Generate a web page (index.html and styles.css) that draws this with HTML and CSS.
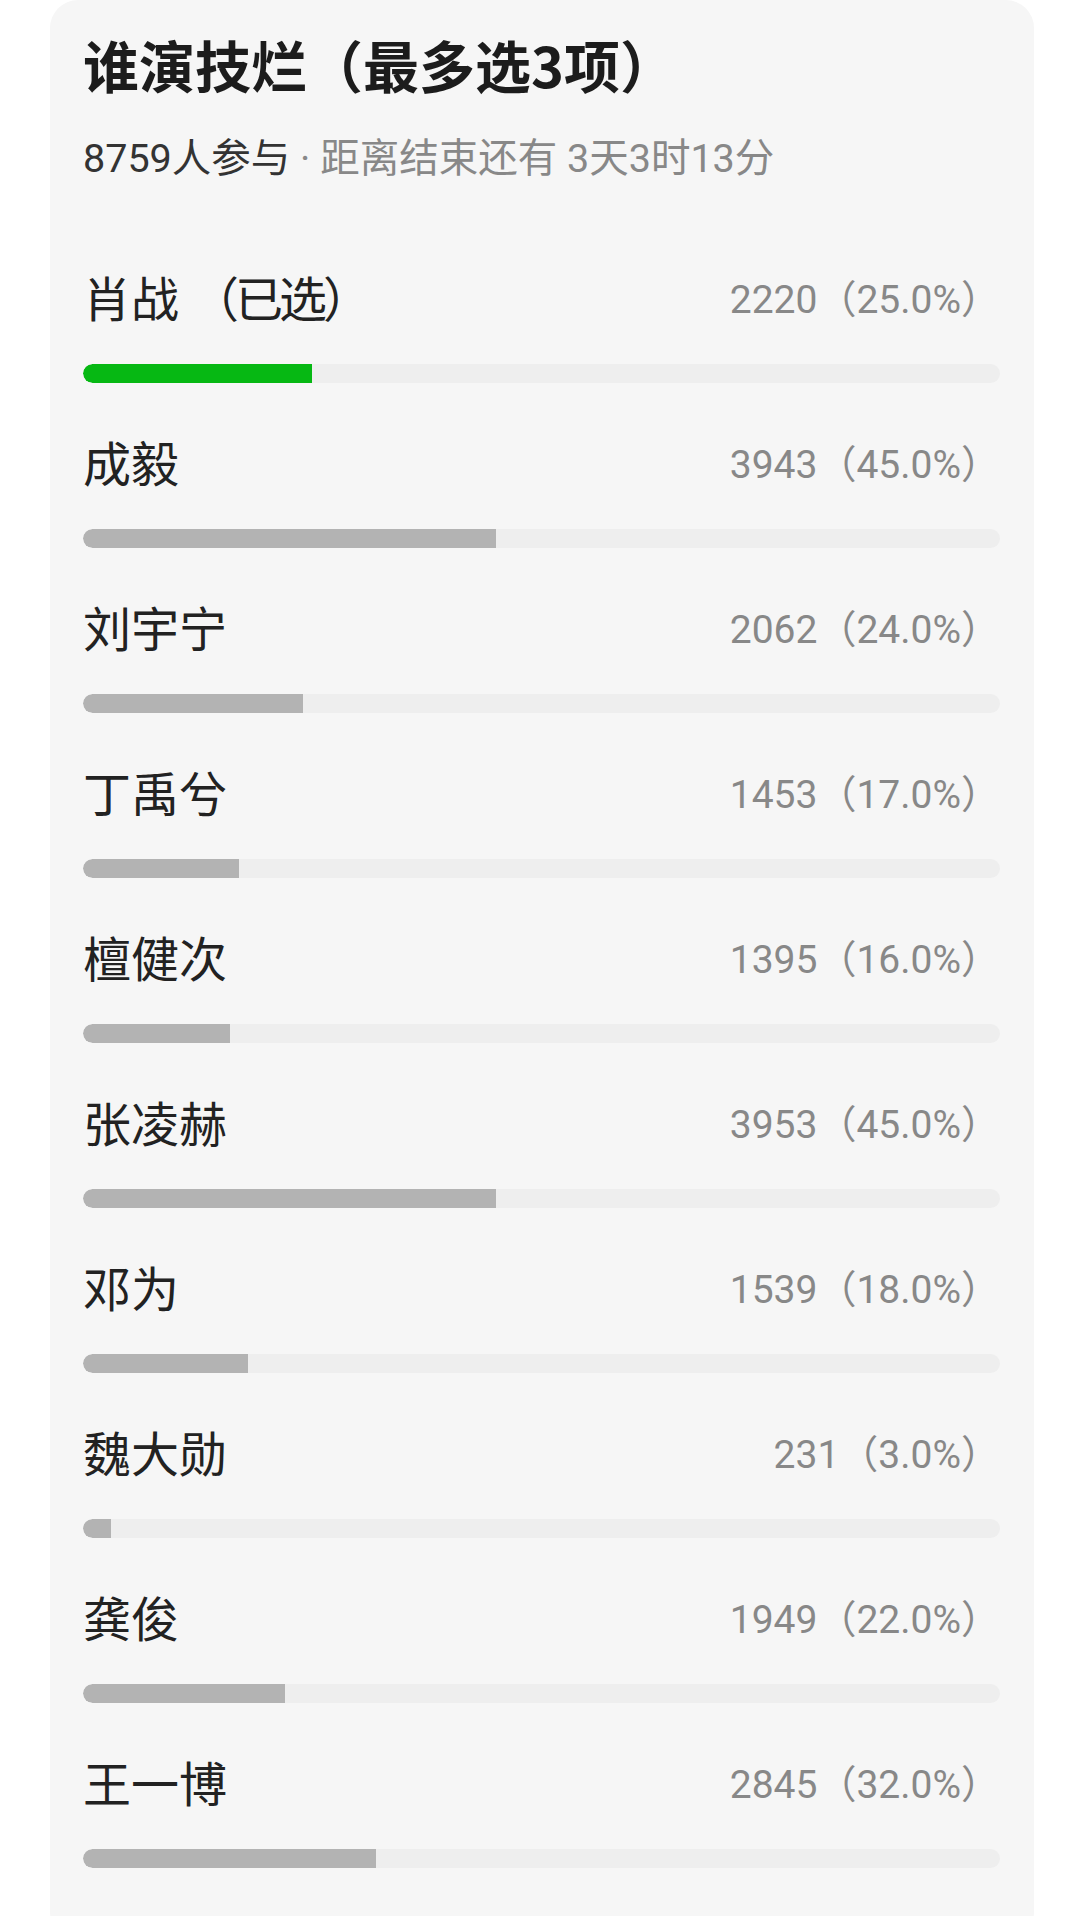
FILE: index.html
```html
<!DOCTYPE html>
<html lang="zh-CN">
<head>
<meta charset="UTF-8">
<meta name="viewport" content="width=device-width, initial-scale=1.0">
<title>谁演技烂</title>
<link rel="stylesheet" href="styles.css">
</head>
<body>

<div class="vote-card">
  <h1 class="vote-title">谁演技烂（最多选3项）</h1>
  <p class="vote-meta"><span class="count-people">8759人参与</span> · 距离结束还有 3天3时13分</p>

  <div class="options">
    <div class="option">
      <div class="option-head">
        <span class="option-name">肖战 <span class="picked">（已选）</span></span>
        <span class="option-count">2220（25.0%）</span>
      </div>
      <div class="bar"><div class="bar-fill chosen" style="width: 25%"></div></div>
    </div>

    <div class="option">
      <div class="option-head">
        <span class="option-name">成毅</span>
        <span class="option-count">3943（45.0%）</span>
      </div>
      <div class="bar"><div class="bar-fill" style="width: 45%"></div></div>
    </div>

    <div class="option">
      <div class="option-head">
        <span class="option-name">刘宇宁</span>
        <span class="option-count">2062（24.0%）</span>
      </div>
      <div class="bar"><div class="bar-fill" style="width: 24%"></div></div>
    </div>

    <div class="option">
      <div class="option-head">
        <span class="option-name">丁禹兮</span>
        <span class="option-count">1453（17.0%）</span>
      </div>
      <div class="bar"><div class="bar-fill" style="width: 17%"></div></div>
    </div>

    <div class="option">
      <div class="option-head">
        <span class="option-name">檀健次</span>
        <span class="option-count">1395（16.0%）</span>
      </div>
      <div class="bar"><div class="bar-fill" style="width: 16%"></div></div>
    </div>

    <div class="option">
      <div class="option-head">
        <span class="option-name">张凌赫</span>
        <span class="option-count">3953（45.0%）</span>
      </div>
      <div class="bar"><div class="bar-fill" style="width: 45%"></div></div>
    </div>

    <div class="option">
      <div class="option-head">
        <span class="option-name">邓为</span>
        <span class="option-count">1539（18.0%）</span>
      </div>
      <div class="bar"><div class="bar-fill" style="width: 18%"></div></div>
    </div>

    <div class="option">
      <div class="option-head">
        <span class="option-name">魏大勋</span>
        <span class="option-count">231（3.0%）</span>
      </div>
      <div class="bar"><div class="bar-fill" style="width: 3%"></div></div>
    </div>

    <div class="option">
      <div class="option-head">
        <span class="option-name">龚俊</span>
        <span class="option-count">1949（22.0%）</span>
      </div>
      <div class="bar"><div class="bar-fill" style="width: 22%"></div></div>
    </div>

    <div class="option">
      <div class="option-head">
        <span class="option-name">王一博</span>
        <span class="option-count">2845（32.0%）</span>
      </div>
      <div class="bar"><div class="bar-fill" style="width: 32%"></div></div>
    </div>
  </div>
</div>

</body>
</html>
```

FILE: styles.css
```css
/* Reset */
* {
  box-sizing: border-box;
  margin: 0;
  padding: 0;
}

body {
  background: #ffffff;
  font-family: Roboto, "Noto Sans CJK SC", sans-serif;
  color: #222222;
  height: 1916px;
  overflow: hidden;
}

/* Card */
.vote-card {
  margin: 0 46px 0 50px;
  min-height: 1940px;
  padding: 31px 34px 0 33px;
  background: #f6f6f6;
  border-radius: 28px;
}

.vote-title {
  font-size: 56px;
  line-height: 66px;
  font-weight: 700;
  color: #1c1c1c;
  font-family: "Noto Sans CJK SC", sans-serif;
}

.vote-meta {
  margin-top: 37px;
  font-size: 39.5px;
  line-height: 50px;
  color: #888888;
}

.vote-meta .count-people {
  color: #333333;
}

/* Options */
.options {
  margin-top: 84px;
  display: flex;
  flex-direction: column;
  gap: 50px;
}

.option-head {
  display: flex;
  justify-content: space-between;
  align-items: center;
  height: 56px;
}

.option-name {
  font-size: 48px;
  color: #222222;
}

.option-name .picked {
  letter-spacing: -4px;
}

.option-count {
  font-size: 39px;
  color: #888888;
}

.bar {
  margin-top: 40px;
  height: 19px;
  background: #eeeeee;
  border-radius: 10px;
  overflow: hidden;
}

.bar-fill {
  height: 100%;
  background: #b3b3b3;
  border-radius: 10px 0 0 10px;
}

.bar-fill.chosen {
  background: #06b813;
}
```
